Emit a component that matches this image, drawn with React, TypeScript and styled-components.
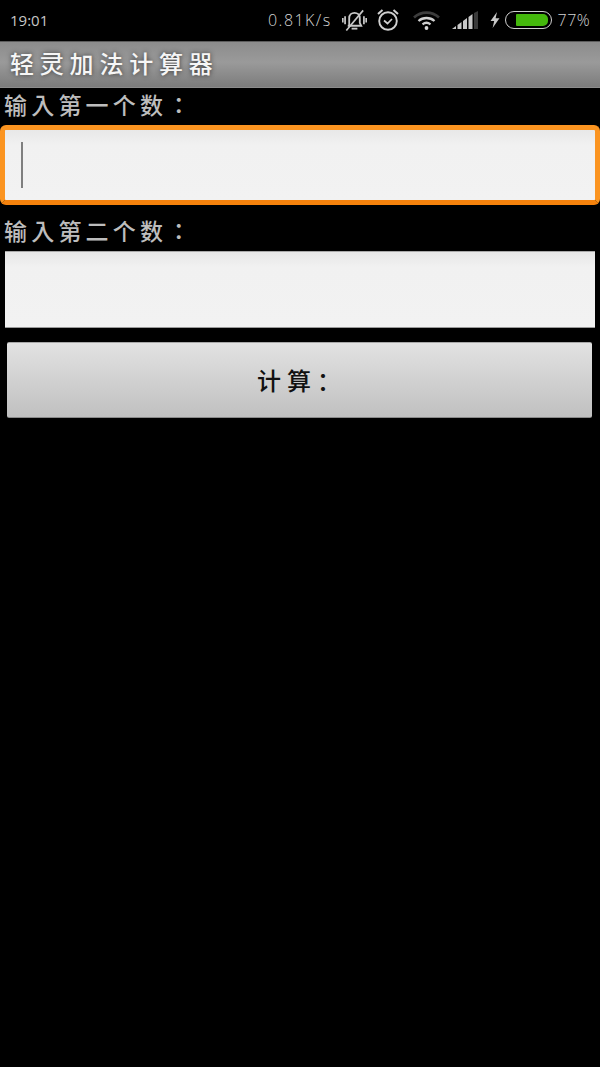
import styled, { createGlobalStyle } from "styled-components";

const GlobalStyle = createGlobalStyle`
  html, body {
    margin: 0;
    padding: 0;
    background: #000;
  }
  body {
    font-family: "Noto Sans CJK TC", "Liberation Sans", sans-serif;
  }
`;

const App = () => {
  return (
    <Screen>
      <GlobalStyle />
      <StatusBar>
        <Clock>19:01</Clock>
        <StatusRight>
          <Speed>0.81K/s</Speed>
          <MuteIcon />
          <AlarmIcon />
          <WifiIcon />
          <SignalIcon />
          <BoltIcon />
          <Battery>
            <BatteryFill />
          </Battery>
          <Percent>77%</Percent>
        </StatusRight>
      </StatusBar>
      <TitleBar>
        <TitleText>轻灵加法计算器</TitleText>
      </TitleBar>
      <Form>
        <FieldLabel>输入第一个数：</FieldLabel>
        <FocusedField>
          <Caret />
        </FocusedField>
        <SecondLabel>输入第二个数：</SecondLabel>
        <PlainField />
        <CalcButton type="button">计算：</CalcButton>
      </Form>
    </Screen>
  );
};
export default App;

const MuteIcon = () => (
  <IconSvg width="25" height="24" viewBox="0 0 26 24" $ml={10}>
    <path d="M7.5 17V10C7.5 6.5 10 4.5 13 4.5C16 4.5 18.5 6.5 18.5 10V15L20 18H6" fill="none" stroke="#c8c8c8" strokeWidth="1.9" />
    <path d="M10 21H16" stroke="#c8c8c8" strokeWidth="1.9" />
    <path d="M3.2 8V16.5M0.8 10V14.5M22.8 8V16.5M25.2 10V14.5" stroke="#c8c8c8" strokeWidth="1.8" />
    <path d="M4.5 23L22 2" stroke="#c8c8c8" strokeWidth="1.7" />
  </IconSvg>
);

const AlarmIcon = () => (
  <IconSvg width="24" height="24" viewBox="0 0 24 24" $ml={9}>
    <circle cx="12" cy="13" r="8.8" fill="none" stroke="#d0d0d0" strokeWidth="1.9" />
    <path d="M8 12.5L11.5 15.5L16 11" fill="none" stroke="#d0d0d0" strokeWidth="1.7" />
    <path d="M2 6L6.5 2M22 6L17.5 2" stroke="#d0d0d0" strokeWidth="2" />
  </IconSvg>
);

const WifiIcon = () => (
  <IconSvg width="27" height="20" viewBox="0 0 27 20" $ml={13}>
    <path d="M1 7.5C8 1 19 1 26 7.5" fill="none" stroke="#3c3c3c" strokeWidth="2.6" />
    <path d="M5.5 11C10 7 17 7 21.5 11" fill="none" stroke="#d0d0d0" strokeWidth="2.3" />
    <path d="M9.5 14.3C12 12.4 15 12.4 17.5 14.3" fill="none" stroke="#d0d0d0" strokeWidth="2.3" />
    <circle cx="13.5" cy="18" r="1.9" fill="#d8d8d8" />
  </IconSvg>
);

const SignalIcon = () => (
  <IconSvg width="26" height="18" viewBox="0 0 26 18" $ml={12}>
    <path d="M0 18L4 15V18Z" fill="#c8c8c8" />
    <path d="M5.5 14L9.5 11V18H5.5Z" fill="#c8c8c8" />
    <path d="M11 10L15 7V18H11Z" fill="#c8c8c8" />
    <path d="M16.5 6L20.5 3V18H16.5Z" fill="#c8c8c8" />
    <path d="M22 2L26 0V18H22Z" fill="#3a3a3a" />
  </IconSvg>
);

const BoltIcon = () => (
  <IconSvg width="10" height="16" viewBox="0 0 10 16" $ml={12}>
    <path d="M7 0L0.5 9H4.2L2.6 16L9.5 6.2H5.6L7 0Z" fill="#c8c8c8" />
  </IconSvg>
);

const Screen = styled.div`
  width: 600px;
  height: 1067px;
  background: #000;
  overflow: hidden;
  display: flex;
  flex-direction: column;
`;
const StatusBar = styled.div`
  height: 41px;
  flex-shrink: 0;
  padding: 0 10px 1px;
  box-sizing: border-box;
  display: flex;
  align-items: center;
  justify-content: space-between;
  color: #c6c6c6;
  font-family: "Open Sans", "Liberation Sans", sans-serif;
  font-size: 15px;
`;
const Clock = styled.span`
  letter-spacing: 0;
`;
const StatusRight = styled.div`
  display: flex;
  align-items: center;
`;
const Speed = styled.span`
  color: #d4d4d4;
  font-size: 16px;
  font-weight: 300;
  letter-spacing: 1.45px;
`;
const IconSvg = styled.svg<{ $ml: number }>`
  display: block;
  flex-shrink: 0;
  margin-left: ${({ $ml }) => $ml}px;
`;
const Battery = styled.div`
  width: 47px;
  height: 18px;
  margin-left: 5px;
  box-sizing: border-box;
  border: 1.5px solid #d0d0d0;
  border-radius: 9px;
  padding: 2px 3px 2px 10px;
  display: flex;
`;
const BatteryFill = styled.div`
  flex: 1;
  background: #44b80c;
  border-radius: 1px 5px 5px 1px;
`;
const Percent = styled.span`
  margin-left: 6px;
  color: #d4d4d4;
  font-size: 16px;
  font-weight: 300;
  letter-spacing: 0.4px;
`;
const TitleBar = styled.div`
  height: 47px;
  flex-shrink: 0;
  box-sizing: border-box;
  padding: 0 0 3px 10px;
  display: flex;
  align-items: center;
  background: linear-gradient(#8c8c8c, #9a9a9a 45%, #7c7c7c);
  border-top: 1px solid #5c5c5c;
  border-bottom: 1px solid #8c8c8c;
`;
const TitleText = styled.span`
  color: #f6f6f6;
  font-size: 24px;
  font-weight: 500;
  letter-spacing: 5.8px;
  line-height: 1;
  text-shadow: 0 0 5px rgba(40, 40, 40, 0.9);
`;
const Form = styled.div`
  display: flex;
  flex-direction: column;
`;
const FieldLabel = styled.div`
  height: 37px;
  padding-left: 4px;
  color: #bdbdbd;
  font-size: 23px;
  font-weight: 500;
  letter-spacing: 4.2px;
  line-height: 33px;
  white-space: nowrap;
`;
const SecondLabel = styled(FieldLabel)`
  height: 46px;
  line-height: 51px;
`;
const FocusedField = styled.div`
  height: 80px;
  box-sizing: border-box;
  padding-left: 16px;
  display: flex;
  align-items: center;
  border: 5px solid #fb9420;
  border-bottom-color: #f5820c;
  border-radius: 6px;
  background: linear-gradient(#e8e8e8, #f1f1f1 22%, #f2f2f2);
`;
const Caret = styled.div`
  width: 2px;
  height: 46px;
  background: #7f7f7f;
`;
const PlainField = styled.div`
  height: 77px;
  margin: 0 5px;
  background: linear-gradient(#e6e6e6, #f1f1f1 20%, #f2f2f2);
  border-top: 1px solid #a8a8a8;
  border-bottom: 1px solid #9a9a9a;
  box-sizing: border-box;
`;
const CalcButton = styled.button`
  height: 76px;
  margin: 14px 8px 0 7px;
  padding: 0 0 2px 5px;
  box-sizing: border-box;
  border: none;
  border-top: 1px solid #a8a8a8;
  border-bottom: 1px solid #8a8a8a;
  border-radius: 2px;
  background: linear-gradient(#e2e2e2, #c0c0c0);
  color: #111;
  font-family: "Noto Sans CJK SC", "Liberation Sans", sans-serif;
  font-size: 24px;
  font-weight: 500;
  letter-spacing: 6px;
`;
